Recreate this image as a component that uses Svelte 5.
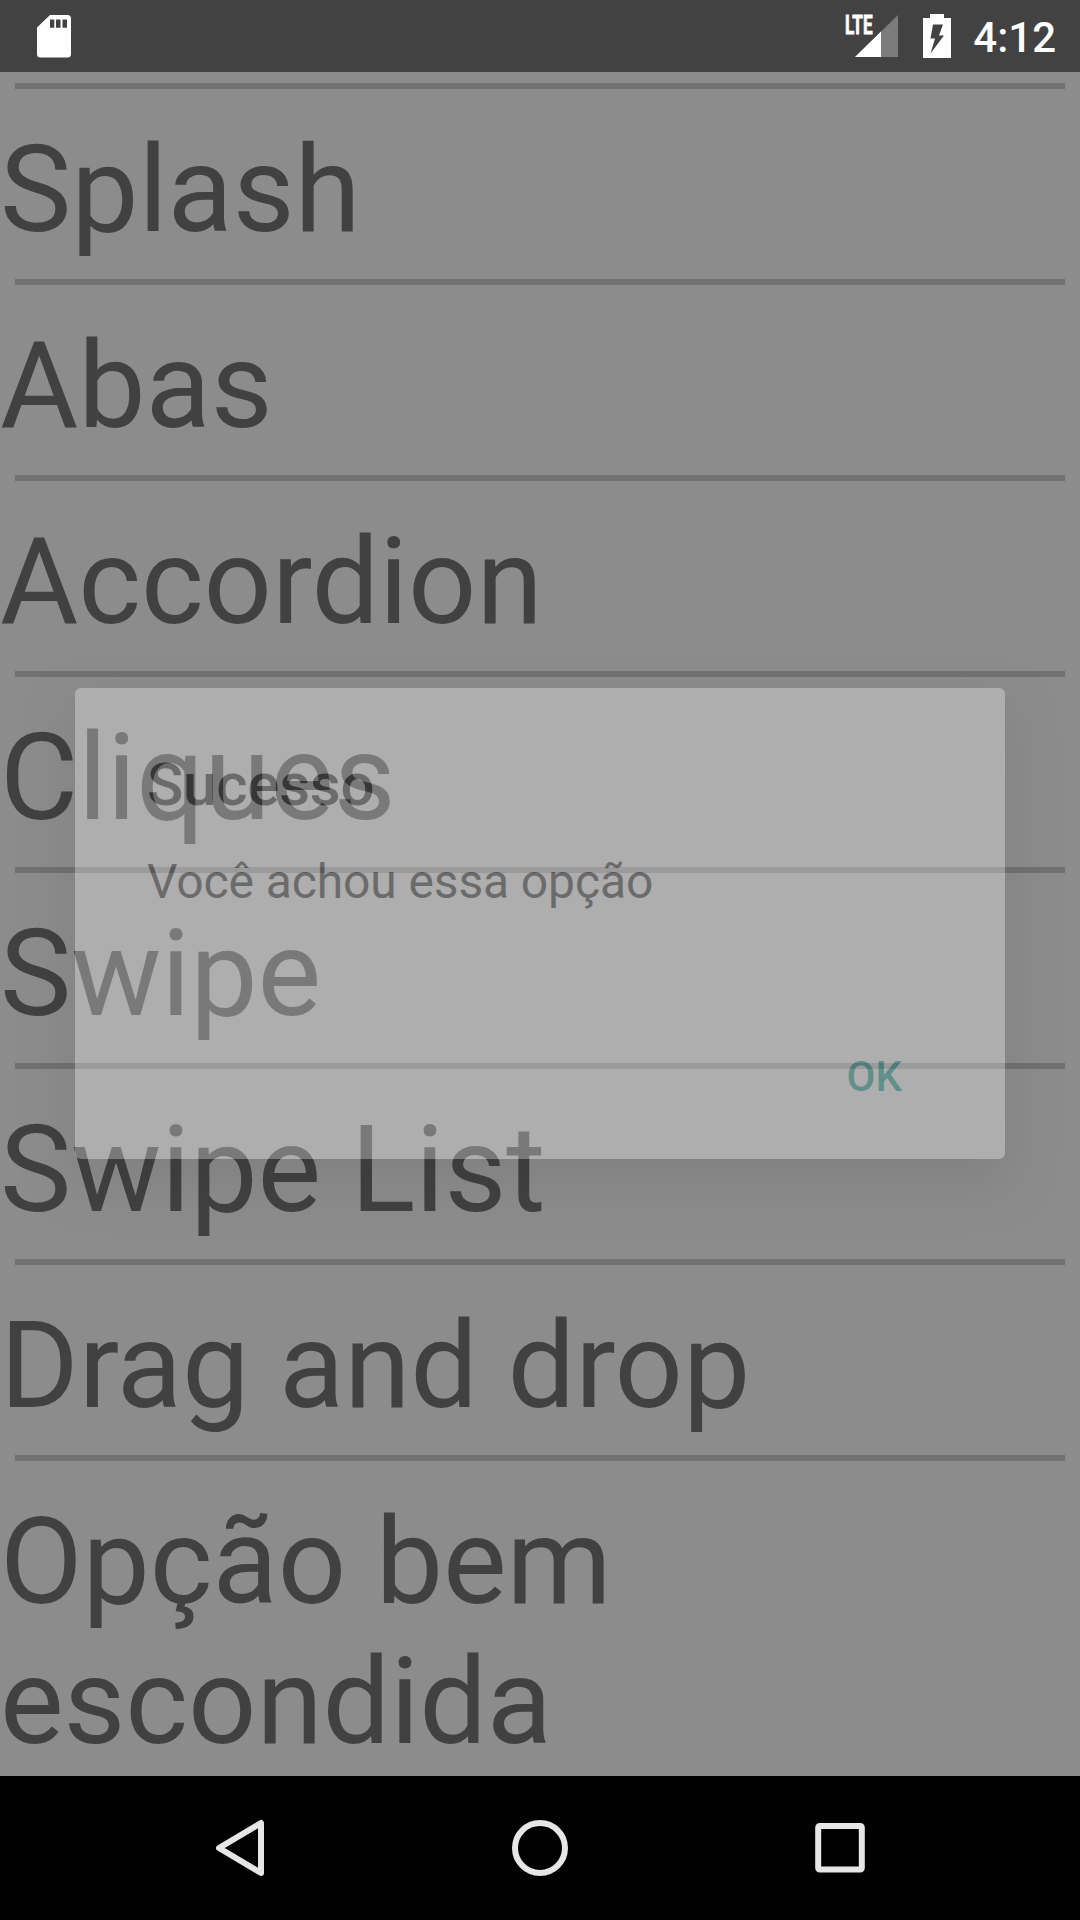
<script>
  const items = [
    'Splash',
    'Abas',
    'Accordion',
    'Cliques',
    'Swipe',
    'Swipe List',
    'Drag and drop',
    'Opção bem escondida',
  ];
</script>

<div class="screen">
  <header class="status">
    <svg class="sd" width="34" height="43" viewBox="0 0 34 43">
      <path
        fill="#fff"
        fill-rule="evenodd"
        d="M13 0H30.500Q34 0 34 3.500V39Q34 42.500 30.500 42.500H3.500Q0 42.500 0 39V12.500ZM13 4.500V12.800H17.300V4.500ZM19 4.500V12.800H23.500V4.500ZM25.500 4.500V12.800H30V4.500Z"
      />
    </svg>
    <div class="right">
      <svg class="signal" width="54" height="44" viewBox="0 0 54 44">
        <path d="M53 1V43H10Z" fill="#7c7c7c" />
        <path d="M36 17.600V43H10Z" fill="#fff" />
        <text x="0" y="19.500" textLength="27.500" lengthAdjust="spacingAndGlyphs">LTE</text>
      </svg>
      <svg class="battery" width="28" height="44" viewBox="0 0 28 44">
        <path
          fill="#fff"
          fill-rule="evenodd"
          d="M7 0H21V4H28V44H0V4H7ZM10 10.500L7.500 24.500H12L7.500 39.500L21 21.500H16L20 10.500Z"
        />
      </svg>
      <span class="clock">4:12</span>
    </div>
  </header>

  <main>
    <ul>
      {#each items as item}
        <li><hr /><span>{item}</span></li>
      {/each}
    </ul>
  </main>

  <nav>
    <svg width="1080" height="144" viewBox="0 0 1080 144" fill="none" stroke="#e6e6e6" stroke-width="6">
      <path d="M261 47V97L219 72Z" stroke-linejoin="round" />
      <circle cx="540" cy="72" r="25" />
      <rect x="818.200" y="50" width="43.600" height="43.600" rx="1.500" />
    </svg>
  </nav>

  <div class="dialog" role="dialog" aria-label="Sucesso">
    <h2>Sucesso</h2>
    <p>Você achou essa opção</p>
    <div class="actions"><button>OK</button></div>
  </div>
</div>

<style>
  :global(body) {
    margin: 0;
    background: #8c8c8c;
  }
  .screen {
    position: relative;
    display: flex;
    flex-direction: column;
    width: 1080px;
    height: 1920px;
    overflow: hidden;
    background: #8c8c8c;
    font-family: Roboto, sans-serif;
  }
  .status {
    display: flex;
    justify-content: space-between;
    align-items: flex-start;
    box-sizing: border-box;
    height: 72px;
    flex: none;
    padding: 14px 24px 0 37px;
    background: #424242;
  }
  .sd {
    display: block;
    margin-top: 1px;
  }
  .right {
    display: flex;
    align-items: flex-start;
  }
  .signal {
    overflow: visible;
  }
  .signal text {
    font-size: 26px;
    font-weight: 700;
    fill: #fff;
    stroke: #fff;
    stroke-width: 0.8px;
  }
  .battery {
    margin-left: 24px;
  }
  .clock {
    margin-left: 22px;
    margin-top: -1px;
    font-size: 42px;
    line-height: 49px;
    font-weight: 500;
    color: #fff;
  }
  main {
    flex: 1;
    min-height: 0;
    overflow: hidden;
    padding-top: 11px;
  }
  ul {
    margin: 0;
    padding: 0;
    list-style: none;
  }
  hr {
    height: 6px;
    margin: 0 15px;
    border: 0;
    background: #717171;
  }
  li span {
    display: block;
    padding: 31px 0 19px;
    font-size: 120px;
    line-height: 140px;
    letter-spacing: -0.1px;
    color: #414141;
  }
  nav {
    flex: none;
    height: 144px;
    background: #000;
  }
  nav svg {
    display: block;
  }
  .dialog {
    position: absolute;
    left: 75px;
    top: 688px;
    display: flex;
    flex-direction: column;
    box-sizing: border-box;
    width: 930px;
    height: 471px;
    padding: 62px 72px 40px;
    border-radius: 6px;
    background: #fcfcfc;
    opacity: 0.3;
    box-shadow: 0 22px 55px rgba(0, 0, 0, 0.28);
  }
  h2 {
    margin: 0;
    font-size: 60px;
    line-height: 70px;
    font-weight: 500;
    letter-spacing: -0.25px;
    color: #212121;
  }
  p {
    margin: 34px 0 0;
    font-size: 48px;
    line-height: 56px;
    letter-spacing: -0.12px;
    color: #212121;
  }
  .actions {
    display: flex;
    justify-content: flex-end;
    margin-top: auto;
    padding: 0 31px 18px 0;
  }
  button {
    padding: 0;
    border: 0;
    background: none;
    font: 500 42px/49px Roboto, sans-serif;
    color: #009688;
  }
</style>
